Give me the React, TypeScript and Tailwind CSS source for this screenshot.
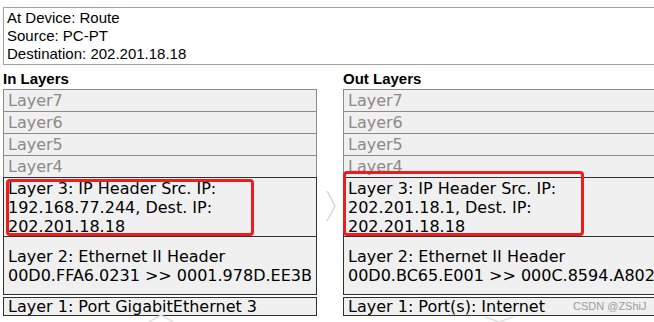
const inRows = {
  title: 'In Layers',
  l3: ['Layer 3: IP Header Src. IP:', '192.168.77.244, Dest. IP:', '202.201.18.18'],
  l2: ['Layer 2: Ethernet II Header', '00D0.FFA6.0231 >> 0001.978D.EE3B'],
  l1: 'Layer 1: Port GigabitEthernet 3',
};

const outRows = {
  title: 'Out Layers',
  l3: ['Layer 3: IP Header Src. IP:', '202.201.18.1, Dest. IP:', '202.201.18.18'],
  l2: ['Layer 2: Ethernet II Header', '00D0.BC65.E001 >> 000C.8594.A802'],
  l1: 'Layer 1: Port(s): Internet',
};

function LayerColumn({ data, width }: { data: typeof inRows; width: string }) {
  return (
    <div className={`${width} shrink-0`}>
      <div className="mt-[5px] h-[19px] font-['Liberation_Sans',Arial,sans-serif] text-[15px] leading-[18px] font-bold text-black">
        {data.title}
      </div>
      <div className="font-['DejaVu_Sans',Verdana,sans-serif] text-[16px] whitespace-nowrap">
        {['Layer7', 'Layer6', 'Layer5', 'Layer4'].map((l) => (
          <div
            key={l}
            className="h-[22px] border-x border-t border-[#8c8c8c] bg-[#f0f0f0] pl-[4px] leading-[21px] text-[#8a8a8a]"
          >
            {l}
          </div>
        ))}
        <div className="h-[60px] border border-[#303030] bg-[#f0f0f0] pl-[4px] pt-[1px] leading-[19px] text-black">
          {data.l3.map((t) => (
            <div key={t}>{t}</div>
          ))}
        </div>
        <div className="h-[58px] border-x border-b border-[#303030] bg-[#f0f0f0] pl-[4px] pt-[10px] leading-[19px] text-black">
          {data.l2.map((t) => (
            <div key={t}>{t}</div>
          ))}
        </div>
        <div className="mt-[2px] h-[19px] border border-[#303030] bg-[#f0f0f0] pl-[4px] leading-[17px] text-black">
          {data.l1}
        </div>
      </div>
    </div>
  );
}

export default function App() {
  return (
    <div className="relative w-[654px] h-[322px] overflow-hidden bg-white">
      <div className="pt-[7px] pl-[3px]">
        <div className="w-[700px] h-[58px] border border-[#a0a0a0] pl-[3px] pt-[1px] font-['Liberation_Sans',Arial,sans-serif] text-[15px] leading-[18px] text-black">
          <div>At Device: Route</div>
          <div>Source: PC-PT</div>
          <div>Destination: 202.201.18.18</div>
        </div>
      </div>

      <div className="flex gap-[26px] pl-[3px]">
        <LayerColumn data={inRows} width="w-[314px]" />
        <LayerColumn data={outRows} width="w-[340px]" />
      </div>

      {/* faint arrow between columns */}
      <svg className="absolute left-[325px] top-[190px]" width="12" height="32" viewBox="0 0 12 32">
        <polyline points="2,1 10,16 2,31" fill="none" stroke="#d6d6d6" strokeWidth="1.5" />
      </svg>
      <svg className="absolute left-[148px] top-[314px]" width="26" height="8" viewBox="0 0 26 8">
        <polyline points="1,8 13,1 25,8" fill="none" stroke="#e0e0e0" strokeWidth="1.5" />
      </svg>
      <svg className="absolute left-[484px] top-[316px]" width="30" height="6" viewBox="0 0 30 6">
        <polyline points="1,1 15,6 29,1" fill="none" stroke="#e0e0e0" strokeWidth="1.5" />
      </svg>

      {/* red highlight boxes */}
      <div className="absolute left-[6px] top-[179px] w-[248px] h-[57px] rounded-[4px] border-[3px] border-[#ee1c1c]" />
      <div className="absolute left-[343px] top-[171px] w-[241px] h-[65px] rounded-[4px] border-[3px] border-[#ee1c1c]" />

      <div className="absolute left-[573px] top-[299px] font-['Liberation_Sans',Arial,sans-serif] text-[11px] leading-[14px] text-[#9c9c9c]">
        CSDN @ZShiJ
      </div>
    </div>
  );
}
